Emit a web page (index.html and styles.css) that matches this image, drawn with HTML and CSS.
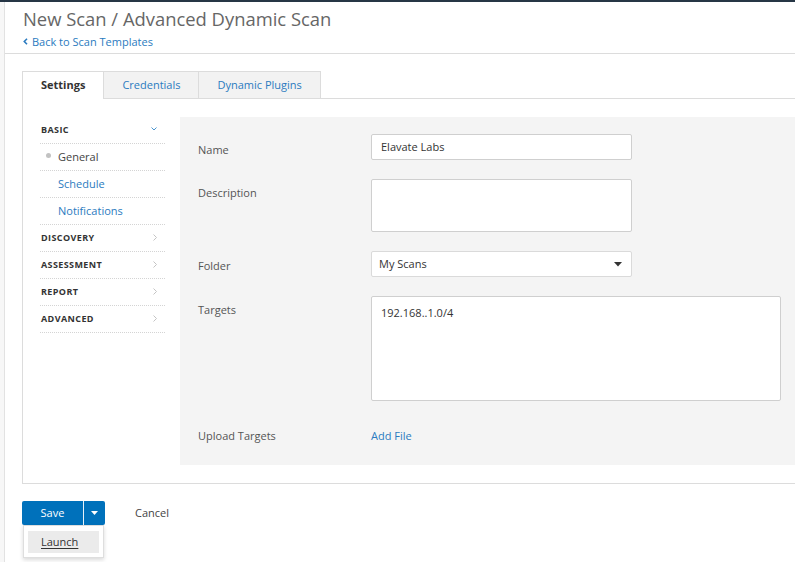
FILE: index.html
```html
<!DOCTYPE html>
<html lang="en">
<head>
<meta charset="utf-8">
<title>New Scan / Advanced Dynamic Scan</title>
<link rel="stylesheet" href="styles.css">
</head>
<body>
<div class="topbar"></div>
<div class="page">
  <header class="page-header">
    <h1 class="title">New Scan / Advanced Dynamic Scan</h1>
    <a class="back-link" href="#"><svg width="5" height="7" viewBox="0 0 5 7"><path d="M4 0.8L1.3 3.5L4 6.2" fill="none" stroke="#2b7bc0" stroke-width="1.6"/></svg>Back to Scan Templates</a>
  </header>
  <main class="content">
    <ul class="tabs">
      <li class="tab active">Settings</li>
      <li class="tab">Credentials</li>
      <li class="tab">Dynamic Plugins</li>
    </ul>
    <section class="panel">
      <nav class="side-nav">
        <div class="nav-head">BASIC<svg class="chev" width="6" height="4" viewBox="0 0 6 4"><path d="M0.5 0.5L3 3L5.5 0.5" fill="none" stroke="#4a95cf" stroke-width="1"/></svg></div>
        <div class="nav-sub current"><span class="dot"></span>General</div>
        <div class="nav-sub">Schedule</div>
        <div class="nav-sub">Notifications</div>
        <div class="nav-head">DISCOVERY<svg class="chev" width="4" height="7" viewBox="0 0 4 7"><path d="M0.5 0.5L3.5 3.5L0.5 6.5" fill="none" stroke="#c4c4c4" stroke-width="1"/></svg></div>
        <div class="nav-head">ASSESSMENT<svg class="chev" width="4" height="7" viewBox="0 0 4 7"><path d="M0.5 0.5L3.5 3.5L0.5 6.5" fill="none" stroke="#c4c4c4" stroke-width="1"/></svg></div>
        <div class="nav-head">REPORT<svg class="chev" width="4" height="7" viewBox="0 0 4 7"><path d="M0.5 0.5L3.5 3.5L0.5 6.5" fill="none" stroke="#c4c4c4" stroke-width="1"/></svg></div>
        <div class="nav-head">ADVANCED<svg class="chev" width="4" height="7" viewBox="0 0 4 7"><path d="M0.5 0.5L3.5 3.5L0.5 6.5" fill="none" stroke="#c4c4c4" stroke-width="1"/></svg></div>
      </nav>
      <form class="form-area">
        <div class="row">
          <label class="label label-name">Name</label>
          <input class="field" type="text" value="Elavate Labs">
        </div>
        <div class="row">
          <label class="label label-desc">Description</label>
          <textarea class="field area-desc"></textarea>
        </div>
        <div class="row">
          <label class="label">Folder</label>
          <div class="field select"><span>My Scans</span><svg width="8" height="5" viewBox="0 0 8 5"><path d="M0 0H8L4 4.5Z" fill="#333"/></svg></div>
        </div>
        <div class="row row-targets">
          <label class="label label-desc">Targets</label>
          <textarea class="field area-targets">192.168..1.0/4</textarea>
        </div>
        <div class="row row-upload">
          <label class="label">Upload Targets</label>
          <a class="add-file" href="#">Add File</a>
        </div>
      </form>
    </section>
    <div class="actions">
      <div class="split-btn">
        <button class="btn-main" type="button">Save</button><button class="btn-caret" type="button"><svg width="7" height="4" viewBox="0 0 7 4"><path d="M0 0H7L3.5 4Z" fill="#fff"/></svg></button>
        <div class="menu">
          <div class="menu-item"><span>Launch</span></div>
        </div>
      </div>
      <a class="cancel" href="#">Cancel</a>
    </div>
  </main>
</div>
</body>
</html>
```
FILE: styles.css
```css
html, body {
  margin: 0;
  height: 100%;
  overflow: hidden;
}
body {
  background: #f7f7f7;
  font-family: "Open Sans", "Liberation Sans", sans-serif;
  font-size: 11px;
  color: #444;
}
.topbar {
  height: 2px;
  background: #263645;
}
.page {
  margin-left: 4px;
  border-left: 1px solid #e2e2e2;
  background: #fff;
  width: 1100px;
  min-height: 600px;
}
.page-header {
  padding: 5px 0 4px 18px;
  border-bottom: 1px solid #dcdcdc;
}
.title {
  margin: 0;
  font-size: 18.4px;
  line-height: 24px;
  font-weight: 400;
  color: #666;
}
.back-link {
  display: flex;
  align-items: center;
  gap: 4px;
  margin-top: 3px;
  line-height: 15px;
  color: #2b7bc0;
  text-decoration: none;
}
.content {
  padding: 17px 0 0 17px;
}
.tabs {
  display: flex;
  align-items: flex-start;
  list-style: none;
  margin: 0;
  padding: 0;
  border-bottom: 1px solid #dcdcdc;
}
.tab {
  height: 26px;
  line-height: 26px;
  padding: 0 18px;
  border: 1px solid #dcdcdc;
  border-bottom: 0;
  margin-right: -1px;
  background: #f2f2f2;
  color: #2b7bc0;
}
.tab.active {
  height: 27px;
  margin-bottom: -1px;
  background: #fff;
  color: #333;
  font-weight: 700;
  position: relative;
}
.panel {
  display: flex;
  border: 1px solid #dcdcdc;
  border-top: 0;
  padding: 18px 17px;
}
.side-nav {
  width: 125px;
  flex-shrink: 0;
  margin-right: 15px;
}
.nav-head,
.nav-sub {
  height: 26px;
  line-height: 25px;
  display: flex;
  align-items: flex-start;
  border-bottom: 1px dotted #d4d4d4;
}
.nav-head {
  justify-content: space-between;
  padding-left: 1px;
  padding-right: 8px;
  font-size: 9px;
  font-weight: 700;
  letter-spacing: 0.4px;
  color: #333;
}
.nav-head .chev {
  align-self: center;
  margin-top: -2px;
}
.nav-sub {
  padding-left: 18px;
  color: #2b7bc0;
}
.nav-sub.current {
  color: #444;
}
.dot {
  align-self: center;
  width: 5px;
  height: 5px;
  border-radius: 50%;
  background: #c2c2c2;
  margin-left: -12px;
  margin-right: 7px;
  margin-top: -3px;
}
.form-area {
  flex: 1;
  margin: 0;
  background: #f4f4f4;
  padding: 17px 18px 18px;
}
.row {
  display: flex;
  align-items: flex-start;
  margin-bottom: 19px;
}
.row-targets {
  margin-bottom: 20px;
}
.row-upload {
  margin-bottom: 0;
  height: 26px;
}
.label {
  width: 173px;
  flex-shrink: 0;
  padding-top: 7px;
  line-height: 15px;
  color: #555;
}
.label-name {
  padding-top: 8px;
}
.label-desc {
  padding-top: 6px;
}
.field {
  box-sizing: border-box;
  width: 261px;
  height: 26px;
  margin: 0;
  border: 1px solid #cfcfcf;
  border-radius: 2px;
  background: #fff;
  padding: 0 9px 1px;
  font: inherit;
  color: #333;
  outline: none;
}
textarea.field {
  resize: none;
  padding: 8px 9px;
  line-height: 15px;
}
.area-desc {
  height: 53px;
}
.area-targets {
  width: 410px;
  height: 105px;
}
.select {
  display: flex;
  align-items: center;
  justify-content: space-between;
  padding: 0 9px 2px 7px;
  border-color: #dadada;
}
.select svg {
  margin-top: 2px;
}
.add-file {
  padding-top: 7px;
  line-height: 15px;
  color: #2b7bc0;
  text-decoration: none;
}
.actions {
  display: flex;
  align-items: center;
  gap: 30px;
  margin-top: 17px;
}
.split-btn {
  position: relative;
  display: flex;
}
.btn-main,
.btn-caret {
  height: 24px;
  border: 0;
  background: #0071bb;
  color: #fff;
  font: inherit;
  padding: 0;
  margin: 0;
}
.btn-main {
  width: 61px;
  padding-bottom: 2px;
  border-radius: 2px 0 0 2px;
}
.btn-caret {
  width: 22px;
  border-left: 1px solid #e8f1f8;
  border-radius: 0 2px 2px 0;
  display: flex;
  align-items: center;
  justify-content: center;
}
.menu {
  position: absolute;
  top: 24px;
  left: 1px;
  width: 81px;
  box-sizing: border-box;
  background: #fff;
  border: 1px solid #dedede;
  box-shadow: 0 2px 4px rgba(0, 0, 0, 0.15);
  padding: 5px 4px 4px;
}
.menu-item {
  height: 22px;
  line-height: 21px;
  padding-left: 13px;
  background: #ebebeb;
  color: #333;
}
.menu-item span {
  text-decoration: underline;
  text-underline-offset: 2px;
}
.cancel {
  color: #444;
  padding-bottom: 2px;
  text-decoration: none;
}
```
